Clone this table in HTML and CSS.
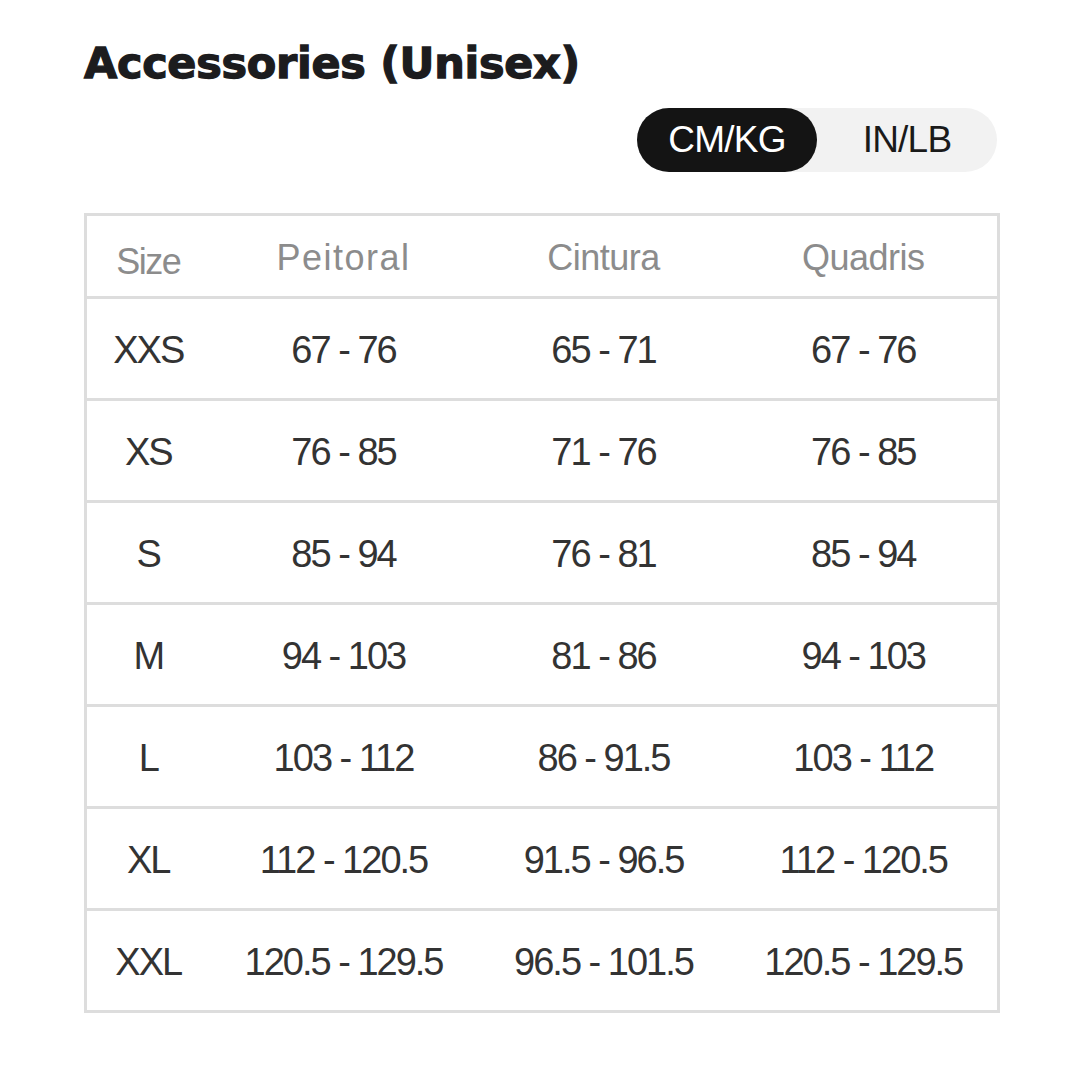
FILE: index.html
```html
<!DOCTYPE html>
<html>
<head>
<meta charset="utf-8">
<link rel="stylesheet" href="styles.css">
</head>
<body>
<div class="page">
  <h1 class="title">Accessories (Unisex)</h1>
  <div class="toggle-row">
    <div class="toggle">
      <span class="opt active">CM/KG</span>
      <span class="opt">IN/LB</span>
    </div>
  </div>
  <table class="chart">
    <colgroup>
      <col class="c-size"><col class="c-a"><col class="c-b"><col class="c-c">
    </colgroup>
    <thead>
      <tr><th class="size-h">Size</th><th class="peit">Peitoral</th><th>Cintura</th><th>Quadris</th></tr>
    </thead>
    <tbody>
      <tr><td>XXS</td><td>67 - 76</td><td>65 - 71</td><td>67 - 76</td></tr>
      <tr><td>XS</td><td>76 - 85</td><td>71 - 76</td><td>76 - 85</td></tr>
      <tr><td>S</td><td>85 - 94</td><td>76 - 81</td><td>85 - 94</td></tr>
      <tr><td>M</td><td>94 - 103</td><td>81 - 86</td><td>94 - 103</td></tr>
      <tr><td>L</td><td>103 - 112</td><td>86 - 91.5</td><td>103 - 112</td></tr>
      <tr><td>XL</td><td>112 - 120.5</td><td>91.5 - 96.5</td><td>112 - 120.5</td></tr>
      <tr><td>XXL</td><td>120.5 - 129.5</td><td>96.5 - 101.5</td><td>120.5 - 129.5</td></tr>
    </tbody>
  </table>
</div>
</body>
</html>
```

FILE: styles.css
```css
html, body {
  margin: 0;
  padding: 0;
  background: #ffffff;
}
.page {
  width: 913px;
  padding: 36px 0 0 84px;
  font-family: "Liberation Sans", Arial, sans-serif;
}
.title {
  margin: 0;
  font-family: "DejaVu Sans", "Liberation Sans", sans-serif;
  font-weight: bold;
  font-size: 43px;
  line-height: 54px;
  color: #1c1c1e;
  letter-spacing: -0.3px;
  -webkit-text-stroke: 1.3px #1c1c1e;
}
.toggle-row {
  display: flex;
  justify-content: flex-end;
  margin-top: 18px;
}
.toggle {
  display: flex;
  width: 360px;
  height: 64px;
  background: #f2f2f2;
  border-radius: 32px;
}
.opt {
  display: flex;
  align-items: center;
  justify-content: center;
  height: 64px;
  font-size: 37px;
  letter-spacing: -0.8px;
  color: #1a1a1a;
  width: 180px;
}
.opt.active {
  background: #141414;
  color: #ffffff;
  border-radius: 32px;
}
.chart {
  margin-top: 41px;
  width: 913px;
  border-collapse: collapse;
  table-layout: fixed;
  border: 3px solid #dddddd;
}
.c-size { width: 124px; }
.c-a { width: 268px; }
.c-b { width: 252px; }
.c-c { width: 269px; }
.chart th, .chart td {
  padding: 0;
  text-align: center;
  border-top: 3px solid #dddddd;
}
.chart th {
  height: 58px;
  padding-top: 22px;
  vertical-align: top;
  font-weight: normal;
  font-size: 36px;
  line-height: 40px;
  color: #8c8c8c;
  letter-spacing: -0.5px;
}
.chart th.size-h {
  padding-top: 26px;
  height: 54px;
  letter-spacing: -1.5px;
}
.chart th.peit {
  letter-spacing: 1.5px;
}
.chart td {
  height: 95px;
  padding-top: 4px;
  font-size: 38px;
  color: #333333;
  letter-spacing: -2px;
}
```
